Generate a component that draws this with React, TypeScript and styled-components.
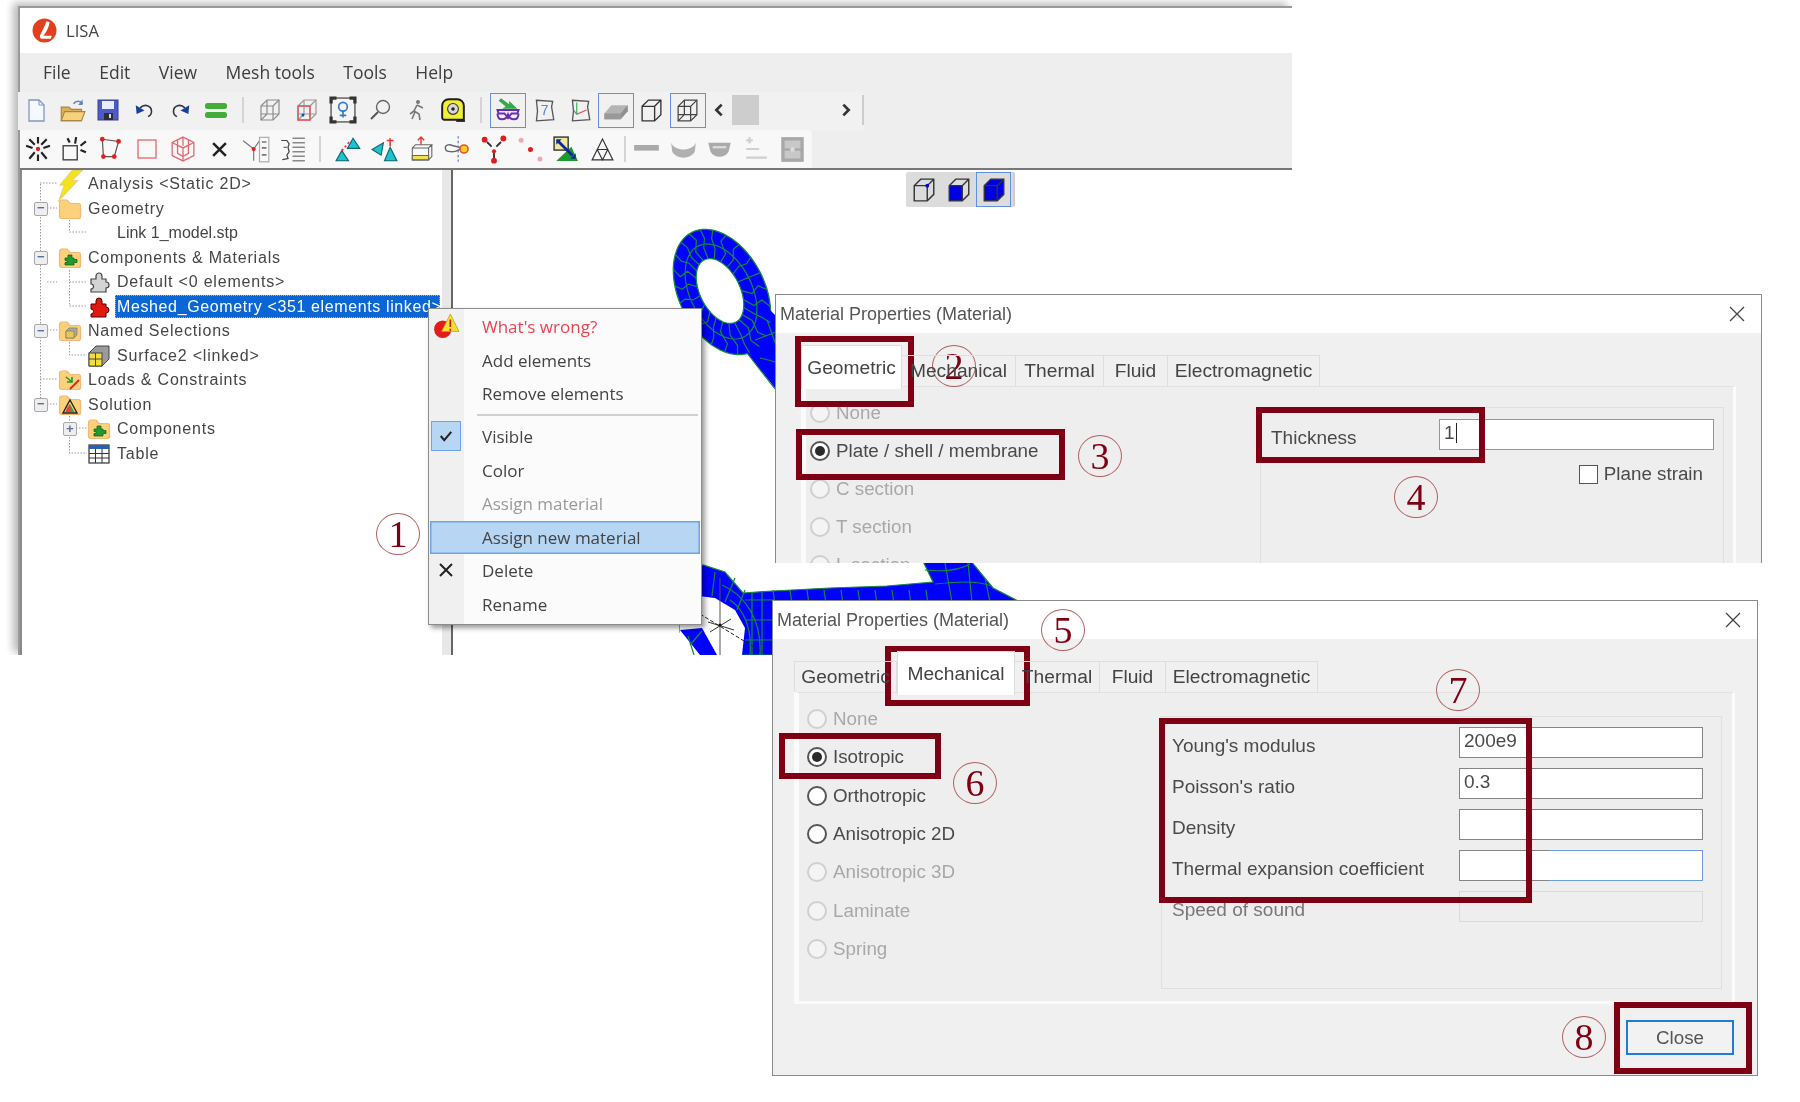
import React from 'react';
import styled, { createGlobalStyle } from 'styled-components';

const Global = createGlobalStyle`
  html, body { margin: 0; padding: 0; background: #fff; }
  body { width: 1800px; height: 1102px; overflow: hidden; font-family: "Liberation Sans", Arial, sans-serif; }
`;

const UI = `"Open Sans", "Liberation Sans", sans-serif`;
const DARK = '#7f0012';

const Page = styled.div`
  position: relative; width: 1800px; height: 1102px; overflow: hidden; background: #fff; filter: blur(0.55px);
`;

/* ---------- main window ---------- */
const Window = styled.div`
  position: absolute; left: 18px; top: 6px; width: 1274px; height: 649px; box-sizing: border-box;
  display: flex; flex-direction: column; background: #eee;
  border-top: 2px solid #999; border-left: 2px solid #999;
  box-shadow: -5px -3px 8px rgba(0,0,0,.28); clip-path: inset(-12px 0 0 -12px);
`;
const TitleBar = styled.div`
  height: 45px; flex: none; background: #fff; display: flex; align-items: center; gap: 9px; padding-left: 12px;
  font: 16.6px ${UI}; color: #444;
`;
const MenuBar = styled.div`
  height: 39px; flex: none; box-sizing: border-box; padding: 0 0 2px 23px; display: flex; align-items: center; gap: 28.5px;
  font: 17.5px ${UI}; color: #3d3d3d;
`;
const ToolRow = styled.div<{ $w: number; $bg: string; $ml?: number; $lift?: number }>`
  height: 38px; flex: none; width: ${p => p.$w}px; display: flex; align-items: center; background: ${p => p.$bg};
  border-radius: 0 4px 0 0; box-sizing: border-box; margin-left: ${p => p.$ml ?? 0}px; padding-bottom: ${p => p.$lift ?? 0}px;
`;
const ToolSlot = styled.div<{ $w: number; $on?: boolean }>`
  width: ${p => p.$w}px; height: 35px; flex: none; display: flex; align-items: center; justify-content: center; box-sizing: border-box;
  border: ${p => (p.$on ? '1.5px solid #5f90e2' : 'none')};
`;
const ToolSep = styled.div<{ $w: number }>`
  width: ${p => p.$w}px; height: 26px; flex: none; position: relative;
  &::after { content: ''; display: block; width: 2px; height: 26px; background: #d4d4d4; margin: 0 auto; }
`;
const ChevronSlot = styled.div`
  width: 26px; flex: none; display: flex; justify-content: center;
`;
const ScrollThumb = styled.div`
  width: 27px; height: 30px; flex: none; background: #cdcdcd;
`;
const ScrollTrack = styled.div`
  flex: 1; display: flex; justify-content: flex-end; padding-right: 8px; border-right: 2px solid #ccc; height: 30px; align-items: center;
`;
const Workspace = styled.div`
  flex: 1; min-height: 0; display: flex; border-top: 2px solid #777; background: #fff;
`;
const Tree = styled.div`
  position: relative; width: 422px; flex: none; box-sizing: border-box; background: #fff; padding-top: 2px; overflow: hidden;
  border-left: 2px solid #8a8a8a;
  font: 16px "Liberation Sans", sans-serif; letter-spacing: .8px; color: #454545;
`;
const TreeLines = styled.svg`
  position: absolute; left: -2px; top: 0; width: 200px; height: 320px; pointer-events: none;
`;
const TreeRow = styled.div<{ $level: number }>`
  position: relative; height: 24.5px; display: flex; align-items: center; padding-left: ${p => (p.$level ? 41 : 12)}px; white-space: nowrap;
`;
const Expander = styled.div<{ $show: boolean }>`
  width: 14px; height: 14px; flex: none; box-sizing: border-box; display: flex; align-items: center; justify-content: center;
  font: 700 13px "Liberation Mono", monospace; letter-spacing: 0; color: #5a6ea0; line-height: 1;
  ${p => (p.$show ? 'border: 1.5px solid #a8a8a8; border-radius: 2px; background: #eee;' : '')}
`;
const TreeIcon = styled.div`
  width: 24px; height: 24px; flex: none; margin: 0 6px 0 10px; display: flex; align-items: center; justify-content: center;
`;
const TreeLabel = styled.span<{ $sel?: boolean; $tight?: boolean }>`
  ${p => (p.$tight ? 'letter-spacing: 0;' : '')}
  ${p => (p.$sel ? `
    background: #0a66d4; color: #fff; height: 23px; line-height: 23px; padding: 0 0 0 2px; margin: 0 2px 0 -2px;
    flex: 1; overflow: hidden; outline: 1px dotted #f0a060; outline-offset: -1px; letter-spacing: .62px;
  ` : '')}
`;
const Splitter = styled.div`
  width: 9px; flex: none; background: #e8e8e8;
`;
const Viewport = styled.div`
  position: relative; flex: 1; background: #fff; border-left: 2px solid #666; overflow: hidden;
`;
const MeshSvg = styled.svg`
  position: absolute; left: 0; top: 0; width: 839px; height: 485px;
`;
const ViewTools = styled.div`
  position: absolute; left: 453px; top: 2px; width: 109px; height: 35px; display: flex; align-items: center; box-sizing: border-box;
  background: #dcdcdc; border-radius: 2px; border-right: 2px solid #ccc;
`;

/* ---------- context menu ---------- */
const ContextMenu = styled.div`
  position: absolute; left: 428px; top: 308px; width: 274px; height: 317px; box-sizing: border-box; padding-top: 1px;
  background: linear-gradient(to right, #f0f0f0 35px, #fbfbfb 35px);
  border: 1.5px solid #8c8c8c; box-shadow: 3px 3px 5px rgba(0,0,0,.4);
  font: 17px ${UI}; color: #444;
`;
const MenuItem = styled.div<{ $state?: 'danger' | 'off' | 'hot' }>`
  position: relative; height: 33.6px; display: flex; align-items: center; padding-left: 53px; box-sizing: border-box;
  ${p => p.$state === 'danger' ? 'color: #f04050;' : ''}
  ${p => p.$state === 'off' ? 'color: #9a9a9a;' : ''}
  ${p => p.$state === 'hot' ? 'background: #b6d6f3; box-shadow: inset 0 0 0 1.5px #6ea3e6; margin: 0 1px; padding-left: 52px;' : ''}
`;
const MenuGlyph = styled.div<{ $on?: boolean }>`
  position: absolute; left: 2px; top: 1px; width: 30px; height: 30px; box-sizing: border-box; display: flex; align-items: center; justify-content: center;
  ${p => p.$on ? 'background: #b6d6f3; border: 1.5px solid #6ea3e6;' : ''}
`;
const MenuSep = styled.div`
  height: 9px; display: flex; align-items: center; margin: 0 3px 0 48px;
  &::after { content: ''; display: block; flex: 1; height: 2px; background: #d0d0d0; }
`;

/* ---------- dialogs ---------- */
const Dialog = styled.div<{ $x: number; $y: number; $w: number; $h: number; $open?: boolean }>`
  position: absolute; left: ${p => p.$x}px; top: ${p => p.$y}px; width: ${p => p.$w}px; height: ${p => p.$h}px;
  box-sizing: border-box; overflow: hidden; background: #f0f0f0; display: flex; flex-direction: column;
  border: 1.5px solid #8a8a8a; ${p => p.$open ? 'border-bottom: none;' : ''}
  font: 18.8px "Liberation Sans", sans-serif; color: #4a4a4a;
`;
const DialogTitle = styled.div`
  height: 38px; flex: none; background: #fff; display: flex; align-items: center; justify-content: space-between; padding-left: 4px;
  font-size: 18px; color: #555;
`;
const CloseX = styled.svg`
  width: 16px; height: 16px; margin-right: 16px; flex: none;
`;
const DialogBody = styled.div<{ $pad: string }>`
  flex: 1; padding: ${p => p.$pad};
`;
const TabRow = styled.div`
  display: flex; height: 31px; align-items: flex-start; position: relative; z-index: 1; font-size: 19.2px;
`;
const Tab = styled.div<{ $w: number; $active?: boolean; $first?: boolean }>`
  width: ${p => p.$w}px; height: 31px; box-sizing: border-box; flex: none; display: flex; align-items: center; justify-content: center; white-space: nowrap;
  border: 1.5px solid #dedede; border-bottom: none; border-left: ${p => p.$first ? '1.5px solid #dedede' : 'none'}; color: #444;
  ${p => p.$active ? 'background: #fff; height: 44px; margin-top: -10px; padding-bottom: 0; border-left: 1.5px solid #dedede;' : ''}
`;
const Panel = styled.div<{ $h: number; $w: number }>`
  width: ${p => p.$w}px; height: ${p => p.$h}px; box-sizing: border-box; display: flex; justify-content: space-between; background: #eee;
  border: 3px solid #fbfbfb; border-left-width: 5px; border-top: 1.5px solid #e2e2e2;
`;
const RadioColumn = styled.div<{ $row: number; $left: number }>`
  display: flex; flex-direction: column; padding: 7px 0 0 ${p => p.$left}px; --row: ${p => p.$row}px;
`;
const RadioRow = styled.div<{ $off?: boolean }>`
  height: var(--row); flex: none; display: flex; align-items: center; gap: 6px; color: ${p => p.$off ? '#a8a8a8' : '#4a4a4a'};
`;
const RadioDot = styled.div<{ $off?: boolean; $on?: boolean }>`
  width: 20px; height: 20px; border-radius: 50%; box-sizing: border-box; flex: none; display: flex; align-items: center; justify-content: center;
  border: 2px solid ${p => p.$off ? '#cfcfcf' : '#555'}; background: ${p => p.$off ? '#f4f4f4' : '#fff'};
  &::after { content: ''; width: 10px; height: 10px; border-radius: 50%; background: ${p => p.$on ? '#2a2a2a' : 'transparent'}; }
`;
const FieldGroup = styled.div<{ $w: number; $mt: number; $mr: number; $h: number; $pad: string }>`
  width: ${p => p.$w}px; height: ${p => p.$h}px; margin: ${p => p.$mt}px ${p => p.$mr}px 0 0; padding: ${p => p.$pad}; box-sizing: border-box;
  border: 1.5px solid #dfdfdf; display: flex; flex-direction: column; gap: 10px; flex: none; font-size: 19px;
`;
const FieldRow = styled.div`
  display: flex; align-items: center; justify-content: space-between; height: 31px; flex: none;
`;
const FieldLabel = styled.span<{ $off?: boolean }>`
  color: ${p => p.$off ? '#777' : '#4a4a4a'}; white-space: nowrap; padding-top: 6px;
`;
const TextInput = styled.div<{ $w: number; $tone?: 'focus' | 'half' | 'off' }>`
  width: ${p => p.$w}px; height: 31px; box-sizing: border-box; padding: 0 0 4px 4px; background: #fff; display: flex; align-items: center;
  border: 1.5px solid #858585; color: #4a4a4a;
  ${p => p.$tone === 'focus' ? 'border-color: #6b9be2;' : ''}
  ${p => p.$tone === 'half' ? 'border-image: linear-gradient(90deg, #858585 37%, #6b9be2 37%) 1;' : ''}
  ${p => p.$tone === 'off' ? 'background: #eeeeee; border-color: #dadada;' : ''}
`;
const Caret = styled.span`
  display: inline-block; width: 1px; height: 20px; background: #222; margin-left: 1px;
`;
const CheckRow = styled.div`
  display: flex; justify-content: flex-end; align-items: center; gap: 6px; margin: 3px 11px 0 0; font-size: 18.8px;
`;
const CheckBox = styled.div`
  width: 19px; height: 19px; box-sizing: border-box; border: 1.5px solid #555; background: #fff;
`;
const Footer = styled.div`
  display: flex; justify-content: flex-end; margin-top: 16px; width: 940px;
`;
const CloseButton = styled.div`
  width: 108px; height: 35px; box-sizing: border-box; border: 2.5px solid #1f7bdc; background: #f2f2f2; display: flex; align-items: center; justify-content: center;
  color: #555;
`;

/* ---------- annotations ---------- */
const RedBox = styled.div<{ $x: number; $y: number; $w: number; $h: number }>`
  position: absolute; left: ${p => p.$x}px; top: ${p => p.$y}px; width: ${p => p.$w}px; height: ${p => p.$h}px; box-sizing: border-box;
  border: 6.5px solid ${DARK}; pointer-events: none;
`;
const Badge = styled.div<{ $x: number; $y: number }>`
  position: absolute; left: ${p => p.$x - 22}px; top: ${p => p.$y - 21}px; width: 44px; height: 42px; box-sizing: border-box; border-radius: 50%;
  border: 1.5px solid #b06060; display: flex; align-items: center; justify-content: center;
  font: 38px/1 "Liberation Serif", serif; color: ${DARK};
`;

/* ---------- icons ---------- */
const IconSvg = styled.svg<{ $s: number }>`
  width: ${p => p.$s}px; height: ${p => p.$s}px; flex: none; overflow: visible; display: block;
`;
const I = ({ s = 24, children }: { s?: number; children: React.ReactNode }) => (
  <IconSvg $s={s} viewBox="0 0 24 24" fill="none">{children}</IconSvg>
);

const wireCube = (c: string, front = c) => (
  <>
    <path d="M3 8l6-6h12v14l-6 6H3z" stroke={c} strokeWidth="1.2" />
    <path d="M3 8h12v14M15 8l6-6M9 2v14H3M9 16h12M9 16l-6 6" stroke={c} strokeWidth="1.2" />
    {front !== c && <path d="M3 8h12v14H3z" stroke={front} strokeWidth="1.4" />}
  </>
);
const solidCube = (
  <path d="M3 8l6-6h12v14l-6 6H3zM3 8h12v14M15 8l6-6" stroke="#333" strokeWidth="1.3" />
);
const puzzle = 'M4 9h5V6a3 3 0 0 1 6 0v3h4v3a3 3 0 0 1 0 6v4H4v-3a2.5 2.5 0 0 0 0-5z';
const folderPath = 'M1.5 5.5A2.5 2.5 0 0 1 4 3h5l3 3.5h8.5A2 2 0 0 1 22.5 8.5v11a2 2 0 0 1-2 2h-17a2 2 0 0 1-2-2z';
const Folder = ({ children }: { children?: React.ReactNode }) => (
  <I><path d={folderPath} fill="#fdd17a" stroke="#f3b877" strokeWidth="1.2" />{children}</I>
);
const greenPuzzle = (
  <path d="M7 12h3V9h4v3h2v1.5h3v3h-3V19H7v-2.5h2v-2H7z" fill="#1f9a2e" stroke="#0d5a16" strokeWidth=".7" />
);

const tb1: React.ReactNode[] = [
  <I s={24}><path d="M5 2h10l5 5v16H5z" fill="#f4f8ff" stroke="#7f96c4" strokeWidth="1.3" /><path d="M15 2v5h5" stroke="#7f96c4" /></I>,
  <I s={27}><path d="M2 9h7l2 2h9v10H2z" fill="#d8b057" stroke="#a88540" /><path d="M5 13h18l-3 8H2z" fill="#f6d27c" stroke="#a88540" /><path d="M13 6c2-3 6-3 8 0" stroke="#6684b4" strokeWidth="1.5" /><path d="M21 2v5h-4" fill="#6684b4" /></I>,
  <I><rect x="2" y="2" width="20" height="20" fill="#4d5bc8" stroke="#37428f" /><rect x="6" y="3" width="12" height="8" fill="#e8ecff" /><rect x="8" y="15" width="9" height="7" fill="#2d2d3a" /><rect x="13" y="16" width="2" height="4" fill="#ddd" /></I>,
  <I s={21}><path d="M7 9c5-5 13-3 13 4 0 3-2 5-4 6" stroke="#334" strokeWidth="1.8" /><path d="M2 6l1 10 9-4z" fill="#1a3f9a" /></I>,
  <I s={21}><path d="M17 9c-5-5-13-3-13 4 0 3 2 5 4 6" stroke="#334" strokeWidth="1.8" /><path d="M22 6l-1 10-9-4z" fill="#1a3f9a" /></I>,
  <I s={24}><rect x="1" y="5" width="22" height="6" rx="2.5" fill="#45ab3a" /><rect x="1" y="14" width="22" height="6" rx="2.5" fill="#45ab3a" /></I>,
];
const tb2: React.ReactNode[] = [
  <I>{wireCube('#8c8c8c')}</I>,
  <I>{wireCube('#999', '#e4545c')}<circle cx="8" cy="17" r="1.5" fill="#2244cc" /></I>,
  <I s={26}><rect x="1" y="1" width="22" height="22" fill="#f4f4f4" stroke="#777" strokeWidth="1.6" /><path d="M1 6V1h5M18 1h5v5M1 18v5h5M18 23h5v-5" stroke="#333" strokeWidth="3" /><circle cx="12" cy="9" r="4" stroke="#3477d0" strokeWidth="1.5" /><path d="M12 13v6M9 17h6" stroke="#3477d0" strokeWidth="1.5" /></I>,
  <I><circle cx="15" cy="9" r="6.5" stroke="#666" strokeWidth="1.4" /><path d="M10 14l-7 7" stroke="#555" strokeWidth="2" /></I>,
  <I><circle cx="13" cy="4" r="2" fill="#777" /><path d="M12 7l-3 6 5 3 1 6M9 13l-4 3M12 7l6 3M10 14l-3 7" stroke="#777" strokeWidth="1.6" /></I>,
  <I s={26}><path d="M8 2h8a6 6 0 0 1 6 6v13h-18a2 2 0 0 1-2-2V8a6 6 0 0 1 6-6z" fill="#f2ee30" stroke="#1c1c1c" strokeWidth="1.8" /><circle cx="12" cy="11" r="5" fill="#d8d8d8" stroke="#333" /><circle cx="12" cy="11" r="1.6" fill="#222" /><path d="M15 21h8v2h-8z" fill="#222" /></I>,
];
const tb3: React.ReactNode[] = [
  <I s={28}><path d="M3 12h18l-1 3h-5l-3 4-3-4H4zM3 15c0 4 2 5 4 5s4-1 5-4c1 3 3 4 5 4s4-1 4-5" stroke="#6a2db0" strokeWidth="1.7" /><path d="M6 2l7 5V4l7 7H7l3-2-6-5z" fill="#35a84a" /></I>,
  <I s={26}><path d="M5 3l15 1-1 5 2 12-16 1 1-9z" stroke="#555" strokeWidth="1.2" /><text x="9" y="17" fontFamily="Liberation Sans" fontSize="13" fill="#5b7bea">7</text></I>,
  <I s={26}><path d="M5 3l15 1-1 5 2 12-16 1 1-9z" stroke="#555" strokeWidth="1.2" /><path d="M9 5v11" stroke="#35a84a" /><path d="M9 16l9-4" stroke="#e44" /><path d="M9 16l-3-4" stroke="#48c" /></I>,
  <I s={28}><path d="M2 15l6-7h14v5l-6 7H2z" fill="#b4b4b4" /><path d="M2 15h14v5H2z" fill="#999" /><path d="M16 15l6-7v5l-6 7z" fill="#8f8f8f" /></I>,
  <I s={25}>{solidCube}</I>,
  <I s={25}>{wireCube('#444')}</I>,
];
const tb4: React.ReactNode[] = [
  <I s={26}><g stroke="#222" strokeWidth="2"><path d="M12 1v6M12 17v6M1 9l6 2M23 9l-6 2M4 21l5-6M20 21l-5-6M4 3l5 5M20 3l-5 5" /></g><circle cx="12" cy="12" r="2" fill="#e02020" /></I>,
  <I s={26}><rect x="2" y="9" width="13" height="13" stroke="#444" strokeWidth="1.3" /><g stroke="#222" strokeWidth="2"><path d="M14 1l-1 6M23 5l-5 4M23 15l-5-2M6 2l2 4" /></g></I>,
  <I s={26}><path d="M4 3l15 2-4 14H5z" stroke="#555" strokeWidth="1.1" /><g fill="#e81c1c"><circle cx="4" cy="3" r="2.2" /><circle cx="19" cy="5" r="2.2" /><circle cx="15" cy="19" r="2.2" /><circle cx="5" cy="19" r="2.2" /></g></I>,
  <I s={24}><rect x="3" y="3" width="18" height="18" stroke="#e8646e" strokeWidth="1.3" /></I>,
  <I s={26}>{<g stroke="#e8646e" strokeWidth="1.2"><path d="M12 1l10 5v12l-10 5L2 18V6z" /><path d="M12 1v8M2 6l10 5 10-5M12 11v12M7 4v12l5 3 5-3V4" /></g>}</I>,
  <I s={17}><path d="M3 3l18 18M21 3L3 21" stroke="#222" strokeWidth="3.6" /></I>,
  <I s={28}><path d="M1 5l9 7 5-7M10 12v10" stroke="#777" strokeWidth="1" /><circle cx="10" cy="12" r="1.8" fill="#e81c1c" /><rect x="15" y="2" width="8" height="21" stroke="#aaa" /><path d="M17 6l4 0M17 11l4 0M17 17l4 0" stroke="#777" strokeWidth="1.4" /></I>,
  <I s={27}><path d="M2 4h5l2 3-1 3 1 4-2 3 1 3-5 1M4 10h3" stroke="#444" strokeWidth="1.1" /><path d="M12 2h11M12 6h11M12 10h11M12 14h11M12 18h11M12 22h11" stroke="#888" strokeWidth="1.3" /></I>,
];
const tb5: React.ReactNode[] = [
  <I s={27}><path d="M16 2l6 9H11z" fill="#1cc4d0" stroke="#0a6670" /><path d="M6 13l6 9H1z" fill="#1cc4d0" stroke="#0a6670" /><path d="M6 13l8-9" stroke="#e33" strokeDasharray="2 2" strokeWidth="1.5" /></I>,
  <I s={27}><path d="M1 12l10-6-2 11z" fill="#1cc4d0" stroke="#0a6670" /><path d="M17 10l6 12H12z" fill="#1cc4d0" stroke="#0a6670" /><path d="M17 2v7M14 4h6" stroke="#e33" strokeWidth="1.4" /></I>,
  <I s={26}><path d="M4 11h15v11H4zM4 11l3-3h15l-3 3M22 8v11l-3 3" stroke="#666" /><path d="M4 18h15v4H4z" fill="#f2e14a" stroke="#666" /><path d="M12 1v7M9 4l3-3 3 3" stroke="#e33" strokeWidth="1.3" /></I>,
  <I s={28}><path d="M2 11c0-3 4-3 6-2l8 2c-3 3-8 4-11 3-2 0-3-1-3-3z" stroke="#666" strokeWidth="1.2" /><path d="M13 1v22" stroke="#5a6ee0" strokeDasharray="2 2" /><circle cx="18" cy="12" r="3.5" fill="#f4d030" stroke="#e85020" strokeWidth="1.3" /></I>,
  <I s={28}><g stroke="#333" strokeWidth="1.6"><path d="M6 6l4 4M18 6l-4 4M12 14v7" /></g><g fill="#e01c1c"><circle cx="4" cy="4" r="2.5" /><circle cx="20" cy="3" r="2.5" /><circle cx="12" cy="22" r="2.5" /><circle cx="12" cy="14" r="1.8" /></g></I>,
  <I s={25}><circle cx="3" cy="3" r="2.4" fill="#f0a8b0" /><circle cx="12" cy="12" r="2.4" fill="#e01c1c" /><circle cx="21" cy="21" r="2.4" fill="#f0a8b0" /></I>,
  <I s={26}><path d="M3 23l14-13 6 13z" fill="#1a9a30" /><rect x="1" y="1" width="13" height="12" fill="#f2e9a0" stroke="#333" strokeWidth="1.3" /><path d="M5 5l13 13" stroke="#0a2a9a" strokeWidth="2.6" /><path d="M3 3h5L3 8zM21 21h-5l5-5z" fill="#0a2a9a" /></I>,
  <I s={25}><path d="M12 2L2 22h20zM7 12h10L12 22zM12 2" stroke="#333" strokeWidth="1.1" /></I>,
];
const tb6: React.ReactNode[] = [
  <I s={27}><rect x="1" y="8" width="22" height="5" fill="#aaa" /></I>,
  <I s={27}><path d="M1 6c3 8 19 8 22 0l-1 8c-4 7-16 7-20 0z" fill="#b0b0b0" /></I>,
  <I s={27}><path d="M2 6h20l-2 8c-3 6-13 6-16 0z" fill="#aaa" /><path d="M6 9h12v2H6z" fill="#ddd" /></I>,
  <I s={26}><path d="M3 4h6M6 1v6M3 12h12M3 20h19" stroke="#cfcfcf" strokeWidth="2" /></I>,
  <I s={27}><rect x="2" y="1" width="20" height="22" fill="#a8a8a8" /><rect x="5" y="4" width="14" height="7" fill="#c8c8c8" /><rect x="5" y="13" width="14" height="7" fill="#c8c8c8" /><circle cx="12" cy="12" r="2" fill="#ddd" /></I>,
];

const view: React.ReactNode[] = [
  <I s={26}>{solidCube}<circle cx="15" cy="8" r="1.8" fill="#0000e0" /></I>,
  <I s={26}><rect x="3" y="8" width="12" height="14" fill="#0000e0" />{solidCube}</I>,
  <I s={26}><path d="M3 8l6-6h12v14l-6 6H3z" fill="#0000e0" />{solidCube}</I>,
];

const TreeData: { level: number; exp?: '-' | '+'; icon: React.ReactNode; text: string; sel?: boolean; tight?: boolean }[] = [
  { level: 0, icon: <I s={28}><path d="M14 0h9l-9 9h5L2 27l5-14H3z" fill="#f4e21c" stroke="#caa" strokeWidth=".4" /></I>, text: 'Analysis <Static 2D>' },
  { level: 0, exp: '-', icon: <Folder />, text: 'Geometry' },
  { level: 1, icon: null, text: 'Link 1_model.stp', tight: true },
  { level: 0, exp: '-', icon: <Folder>{greenPuzzle}</Folder>, text: 'Components & Materials' },
  { level: 1, icon: <I><path d={puzzle} fill="#d4d4d4" stroke="#444" strokeWidth="1.2" /></I>, text: 'Default <0 elements>' },
  { level: 1, sel: true, icon: <I><path d={puzzle} fill="#e01810" stroke="#500" strokeWidth="1" /></I>, text: 'Meshed_Geometry <351 elements linked>' },
  { level: 0, exp: '-', icon: <Folder><path d="M8 12l3-3h8v7l-3 3H8z" fill="#b0a890" stroke="#777" strokeWidth=".7" /><path d="M8 12h8v7H8z" fill="#e8c850" stroke="#777" strokeWidth=".7" /></Folder>, text: 'Named Selections' },
  { level: 1, icon: <I><path d="M2 9l7-7h13v13l-7 7H2z" fill="#9a9a9a" stroke="#444" /><rect x="2" y="9" width="13" height="13" fill="#f2df3a" stroke="#444" /><path d="M2 15h13M8.500 9v13" stroke="#444" /></I>, text: 'Surface2 <linked>' },
  { level: 0, icon: <Folder><path d="M8 9l6 5M14 9v5H9" stroke="#1a9a30" strokeWidth="1.6" /><path d="M12 21l9-9" stroke="#e62020" strokeWidth="1.8" /></Folder>, text: 'Loads & Constraints' },
  { level: 0, exp: '-', icon: <Folder><path d="M12 7l7 13H5z" stroke="#222" strokeWidth="1.4" /><path d="M12 11l4.500 8h-9z" fill="#2aa84a" /><path d="M9 15l3-4 1 8H7.500z" fill="#f04030" /></Folder>, text: 'Solution' },
  { level: 1, exp: '+', icon: <Folder>{greenPuzzle}</Folder>, text: 'Components' },
  { level: 1, icon: <I><rect x="2" y="3" width="20" height="18" fill="#fff" stroke="#333" strokeWidth="1.2" /><rect x="2" y="3" width="20" height="4" fill="#2a5fb8" /><path d="M2 11.500h20M2 16h20M8.500 7v14M15 7v14" stroke="#333" /></I>, text: 'Table' },
];

/* ---------- mesh drawing ---------- */
const ringPoint = (cx: number, cy: number, a: number, b: number, t: number): [number, number] => [
  cx + a * Math.cos(t) * 0.89 + b * Math.sin(t) * 0.45,
  cy - a * Math.cos(t) * 0.45 + b * Math.sin(t) * 0.89,
];
const closedPath = (cx: number, cy: number, a: number, b: number) => {
  let d = '';
  for (let i = 0; i < 72; i++) {
    const [x, y] = ringPoint(cx, cy, a, b, (i / 72) * Math.PI * 2);
    d += `${i ? 'L' : 'M'}${x.toFixed(1)} ${y.toFixed(1)}`;
  }
  return d + 'Z';
};
const upperMesh = (() => {
  let d = '';
  const n = 23;
  const pt = (t: number, f: number) => {
    const i = ringPoint(720, 291, 20, 35, t);
    const o = ringPoint(722, 292, 43, 67, t);
    return [i[0] + (o[0] - i[0]) * f, i[1] + (o[1] - i[1]) * f];
  };
  for (let i = 0; i < n; i++) {
    const t = (i / n) * Math.PI * 2;
    const w = Math.sin(i * 7.3) * 0.09;
    const a = pt(t, 0), b = pt(t + w, 0.38), c = pt(t - w, 0.7), e = pt(t, 1);
    d += `M${a[0].toFixed(1)} ${a[1].toFixed(1)}L${b[0].toFixed(1)} ${b[1].toFixed(1)}L${c[0].toFixed(1)} ${c[1].toFixed(1)}L${e[0].toFixed(1)} ${e[1].toFixed(1)}`;
  }
  return d + closedPath(721, 291.5, 31, 51);
})();
const lowerGrid = (() => {
  let d = 'M745 600L775 600M745 620L775 620M745 640L775 640M752 593L752 655M762 592L762 655';
  for (let x = 773; x < 932; x += 17) d += `M${x} 590L${x + 2} 604`;
  d += 'M730 600C745 610 752 630 750 655M722 585C745 595 762 620 760 655M715 572L712 596M735 578L725 602M745 590L737 610';
  d += 'M935 584C955 582 975 580 992 586M945 563L952 602M968 563L972 602M985 578L990 602M925 570C945 572 960 570 970 564';
  return d;
})();
const BLUE = '#0000ff';
const GREEN = '#118a3e';
const Mesh = () => (
  <MeshSvg viewBox="453 170 839 485">
    <path d={closedPath(722, 292, 43, 67)} fill={BLUE} stroke={GREEN} strokeWidth="1.3" />
    <path d="M755 295L800 340V392H778L747 353Z" fill={BLUE} />
    <path d={upperMesh} stroke={GREEN} strokeWidth="1.2" fill="none" />
    <path d="M747 353L775 389M767 320L776 345M755 340L776 332M760 358L776 362" stroke={GREEN} strokeWidth="1.2" />
    <path d={closedPath(720, 291, 20, 35)} fill="#fff" stroke={GREEN} strokeWidth="1.2" />
    <path d="M690 570L703 565L725 572L743 593L773 591L830 588L887 586L933 582L920 555H966L993 588L1020 602V655H700L680 632V600Z" fill={BLUE} stroke={GREEN} strokeWidth="1.2" />
    <path d={lowerGrid} stroke={GREEN} strokeWidth="1.2" fill="none" />
    <path d="M680 655V632L702 628L717 655ZM690 595L715 598L735 610L745 628L742 655H717L702 628L680 632V600Z" fill="#fff" />
    <path d="M680 630L702 628L717 655H700Z" fill={BLUE} />
    <path d="M688 636L694 655M702 631L690 645" stroke={GREEN} strokeWidth="1.2" />
    <path d="M720 578V655" stroke="#555" strokeWidth="1" />
    <path d="M710 632L731 619M708 622L734 630" stroke="#333" strokeWidth="1" />
    <path d="M700 614L762 652" stroke="#222" strokeWidth="1" strokeDasharray="4 2" />
    <circle cx="720" cy="625" r="1.5" fill="#111" />
  </MeshSvg>
);

const Circle = ({ x, y, n }: { x: number; y: number; n: number }) => <Badge $x={x} $y={y}>{n}</Badge>;

const radios1 = [
  { t: 'None', off: true }, { t: 'Plate / shell / membrane', on: true }, { t: 'C section', off: true },
  { t: 'T section', off: true }, { t: 'L section', off: true },
];
const radios2 = [
  { t: 'None', off: true }, { t: 'Isotropic', on: true }, { t: 'Orthotropic' }, { t: 'Anisotropic 2D' },
  { t: 'Anisotropic 3D', off: true }, { t: 'Laminate', off: true }, { t: 'Spring', off: true },
];
const XMark = () => (
  <CloseX viewBox="0 0 16 16"><path d="M1 1l14 14M15 1L1 15" stroke="#444" strokeWidth="1.3" /></CloseX>
);
const ChevronIcon = ({ dir }: { dir: 'l' | 'r' }) => (
  <I s={16}><path d={dir === 'l' ? 'M16 4l-8 8 8 8' : 'M8 4l8 8-8 8'} stroke="#333" strokeWidth="4" /></I>
);

export default function App() {
  return (
    <Page>
      <Global />
      <Window>
        <TitleBar>
          <I s={25}>
            <circle cx="12" cy="12" r="11.5" fill="#e2401c" />
            <path d="M14 3c-2 5-4 9-6 13-1 3 0 4 3 4h7l1-3h-8c3-4 5-8 6-13z" fill="#fff" />
          </I>
          <span>LISA</span>
        </TitleBar>
        <MenuBar>
          {['File', 'Edit', 'View', 'Mesh tools', 'Tools', 'Help'].map(m => <span key={m}>{m}</span>)}
        </MenuBar>
        <ToolRow $w={846} $bg="#f1f1f1" $ml={-2} $lift={2}>
          {tb1.map((c, i) => <ToolSlot key={i} $w={36}>{c}</ToolSlot>)}
          <ToolSep $w={18} />
          {tb2.map((c, i) => <ToolSlot key={i} $w={36.6}>{c}</ToolSlot>)}
          <ToolSep $w={18} />
          {tb3.map((c, i) => <ToolSlot key={i} $w={36} $on={i === 0 || i === 3 || i === 5}>{c}</ToolSlot>)}
          <ChevronSlot><ChevronIcon dir="l" /></ChevronSlot>
          <ScrollThumb />
          <ScrollTrack><ChevronIcon dir="r" /></ScrollTrack>
        </ToolRow>
        <ToolRow $w={792} $bg="#f8f8f8">
          {tb4.map((c, i) => <ToolSlot key={i} $w={36.3}>{c}</ToolSlot>)}
          <ToolSep $w={20} />
          {tb5.map((c, i) => <ToolSlot key={i} $w={36.3}>{c}</ToolSlot>)}
          <ToolSep $w={8} />
          {tb6.map((c, i) => <ToolSlot key={i} $w={36.3}>{c}</ToolSlot>)}
        </ToolRow>
        <Workspace>
          <Tree>
            <TreeLines viewBox="20 170 200 320">
              <path
                d="M40.500 184V404M40 183H57M47 208H57M69.500 220V232H86M47 282H57M69.500 270V306M69.500 282H87M69.500 306H87M47 330H57M69.500 342V355H87M40 379H57M47 404H57M69.500 416V453H87M76 428H87"
                stroke="#999" strokeWidth="1" strokeDasharray="1.500 1.500" fill="none"
              />
            </TreeLines>
            {TreeData.map(r => (
              <TreeRow key={r.text + r.level} $level={r.level}>
                <Expander $show={!!r.exp}>{r.exp === '-' ? '−' : r.exp}</Expander>
                <TreeIcon>{r.icon}</TreeIcon>
                <TreeLabel $sel={r.sel} $tight={r.tight}>{r.text}</TreeLabel>
              </TreeRow>
            ))}
          </Tree>
          <Splitter />
          <Viewport>
            <Mesh />
            <ViewTools>
              {view.map((c, i) => <ToolSlot key={i} $w={35} $on={i === 2}>{c}</ToolSlot>)}
            </ViewTools>
          </Viewport>
        </Workspace>
      </Window>

      <ContextMenu>
        <MenuItem $state="danger">
          <MenuGlyph><I s={26}><circle cx="9" cy="15" r="8" fill="#e01c1c" /><path d="M16 1l8 16H8z" fill="#f6e22a" stroke="#b89a20" strokeWidth=".7" /><path d="M16 6v7M16 14.500v2" stroke="#c02020" strokeWidth="1.5" /></I></MenuGlyph>
          What's wrong?
        </MenuItem>
        <MenuItem>Add elements</MenuItem>
        <MenuItem>Remove elements</MenuItem>
        <MenuSep />
        <MenuItem>
          <MenuGlyph $on><I s={14}><path d="M3 12l6 7L21 5" stroke="#222" strokeWidth="3.5" /></I></MenuGlyph>
          Visible
        </MenuItem>
        <MenuItem>Color</MenuItem>
        <MenuItem $state="off">Assign material</MenuItem>
        <MenuItem $state="hot">Assign new material</MenuItem>
        <MenuItem>
          <MenuGlyph><I s={16}><path d="M3 3l18 18M21 3L3 21" stroke="#222" strokeWidth="3" /></I></MenuGlyph>
          Delete
        </MenuItem>
        <MenuItem>Rename</MenuItem>
      </ContextMenu>

      <Dialog $x={775} $y={294} $w={987} $h={269} $open>
        <DialogTitle>Material Properties (Material)<XMark /></DialogTitle>
        <DialogBody $pad="22px 0 0 25px">
          <TabRow>
            <Tab $w={101} $first $active>Geometric</Tab>
            <Tab $w={114}>Mechanical</Tab>
            <Tab $w={88}>Thermal</Tab>
            <Tab $w={64}>Fluid</Tab>
            <Tab $w={152}>Electromagnetic</Tab>
          </TabRow>
          <Panel $w={935} $h={300}>
            <RadioColumn $row={38} $left={4}>
              {radios1.map(r => (
                <RadioRow key={r.t} $off={r.off}><RadioDot $off={r.off} $on={r.on} />{r.t}</RadioRow>
              ))}
            </RadioColumn>
            <FieldGroup $w={464} $h={260} $mt={20} $mr={9} $pad="11px 9px 0 10px">
              <FieldRow>
                <FieldLabel>Thickness</FieldLabel>
                <TextInput $w={275} $tone="focus">1<Caret /></TextInput>
              </FieldRow>
              <CheckRow><CheckBox />Plane strain</CheckRow>
            </FieldGroup>
          </Panel>
        </DialogBody>
      </Dialog>

      <Dialog $x={772} $y={600} $w={986} $h={476}>
        <DialogTitle>Material Properties (Material)<XMark /></DialogTitle>
        <DialogBody $pad="22px 0 0 21px">
          <TabRow>
            <Tab $w={103} $first>Geometric</Tab>
            <Tab $w={118} $active>Mechanical</Tab>
            <Tab $w={85}>Thermal</Tab>
            <Tab $w={66}>Fluid</Tab>
            <Tab $w={152}>Electromagnetic</Tab>
          </TabRow>
          <Panel $w={941} $h={312}>
            <RadioColumn $row={38.3} $left={8}>
              {radios2.map(r => (
                <RadioRow key={r.t} $off={r.off}><RadioDot $off={r.off} $on={r.on} />{r.t}</RadioRow>
              ))}
            </RadioColumn>
            <FieldGroup $w={561} $h={273} $mt={23} $mr={10} $pad="10px 18px 0 10px">
              <FieldRow><FieldLabel>Young's modulus</FieldLabel><TextInput $w={244}>200e9</TextInput></FieldRow>
              <FieldRow><FieldLabel>Poisson's ratio</FieldLabel><TextInput $w={244}>0.3</TextInput></FieldRow>
              <FieldRow><FieldLabel>Density</FieldLabel><TextInput $w={244} /></FieldRow>
              <FieldRow><FieldLabel>Thermal expansion coefficient</FieldLabel><TextInput $w={244} $tone="half" /></FieldRow>
              <FieldRow><FieldLabel $off>Speed of sound</FieldLabel><TextInput $w={244} $tone="off" /></FieldRow>
            </FieldGroup>
          </Panel>
          <Footer><CloseButton>Close</CloseButton></Footer>
        </DialogBody>
      </Dialog>

      <RedBox $x={795} $y={336} $w={119} $h={71} />
      <RedBox $x={796} $y={429} $w={269} $h={51} />
      <RedBox $x={1256} $y={407} $w={229} $h={56} />
      <RedBox $x={885} $y={646} $w={145} $h={60} />
      <RedBox $x={779} $y={733} $w={162} $h={46} />
      <RedBox $x={1159} $y={718} $w={373} $h={185} />
      <RedBox $x={1614} $y={1002} $w={138} $h={72} />

      <Circle x={398} y={534} n={1} />
      <Circle x={954} y={366} n={2} />
      <Circle x={1100} y={456} n={3} />
      <Circle x={1416} y={497} n={4} />
      <Circle x={1063} y={630} n={5} />
      <Circle x={975} y={783} n={6} />
      <Circle x={1458} y={690} n={7} />
      <Circle x={1584} y={1037} n={8} />
    </Page>
  );
}
